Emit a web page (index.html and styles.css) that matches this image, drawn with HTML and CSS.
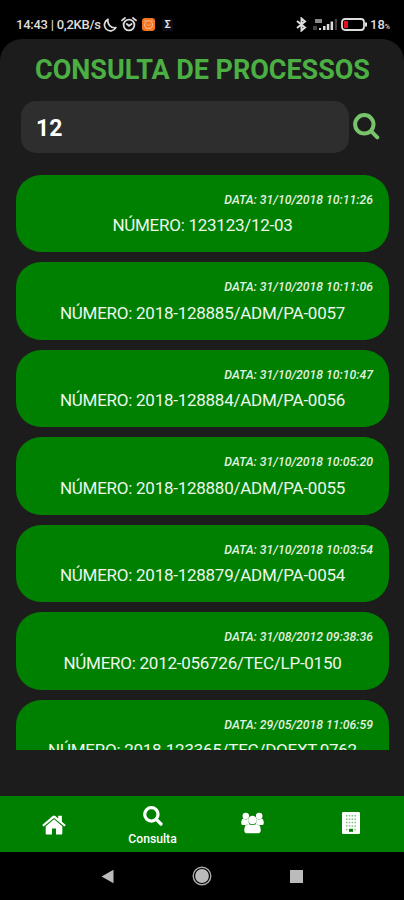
FILE: index.html
```html
<!DOCTYPE html>
<html lang="pt-BR">

<head>
  <meta charset="UTF-8">
  <meta name="viewport" content="width=device-width, initial-scale=1.0">
  <title>Consulta de Processos</title>
  <link rel="stylesheet" href="styles.css">
</head>

<body>
  <div class="phone">
    <header class="status-bar">
      <div class="status-left">
        <span class="status-time">14:43 | 0,2KB/s</span>
        <svg class="icon-moon" width="14" height="14" viewBox="0 0 14 14" fill="none" stroke="#ddd" stroke-width="1.7" stroke-linejoin="round">
          <path d="M5 1.4A6 6 0 1 0 12.8 9.6C8 10.5 4 6 5 1.4Z" />
        </svg>
        <svg class="icon-alarm" width="16" height="15" viewBox="0 0 16 15" fill="none" stroke="#ddd" stroke-width="1.8" stroke-linecap="round">
          <circle cx="8" cy="8" r="5.4" />
          <path d="M1 3.4L4 1M15 3.4L12 1M5.8 7L8 8.8L10.6 7" />
        </svg>
        <svg class="icon-app" width="13" height="13" viewBox="0 0 13 13" fill="none">
          <rect width="13" height="13" rx="3" fill="#f47521" />
          <circle cx="6.5" cy="6.7" r="4" stroke="#ffb07a" stroke-width="1.2" />
          <path d="M4.5 6.3L6.5 7.6L8.8 6.3M2.2 3L3.6 2M10.8 3L9.4 2" stroke="#ffb07a" stroke-width="1" />
        </svg>
        <span class="sigma">Σ</span>
      </div>
      <div class="status-right">
        <svg width="11" height="15" viewBox="0 0 11 15" fill="none" stroke="#ddd" stroke-width="2">
          <path d="M1 4L9 10.5L5.5 13.5V1.5L9 4.5L1 11" />
        </svg>
        <svg class="icon-signal" width="25" height="13" viewBox="0 0 25 13">
          <path d="M2 1H9V5H2Z" fill="#888" />
          <path d="M0 8H4V12H0Z" fill="#444" />
          <path d="M6 10H8V12H6ZM10 8H12.5V12H10ZM13.8 6H16.3V12H13.8ZM17.6 3.5H20.1V12H17.6Z" fill="#ddd" />
          <path d="M21.8 1H24V12H21.8Z" fill="#444" />
        </svg>
        <svg class="icon-battery" width="27" height="13" viewBox="0 0 27 13" fill="none">
          <rect x="1" y="1" width="22" height="11" rx="3" stroke="#ddd" stroke-width="1.8" />
          <path d="M3 3H7V10H3Z" fill="#e0101c" />
          <path d="M25 4.5V8.5" stroke="#ddd" stroke-width="2" />
        </svg>
        <span class="battery-level">18<small>%</small></span>
      </div>
    </header>

    <main class="screen">
      <h1>CONSULTA DE PROCESSOS</h1>

      <form class="search">
        <input type="text" class="search-input" value="12" aria-label="Número do processo">
        <button type="button" class="search-btn" aria-label="Buscar">
          <svg width="27" height="27" viewBox="0 0 27 27" fill="none" stroke="#78c46a" stroke-width="4" stroke-linecap="round">
            <circle cx="11.3" cy="11.3" r="9.2" />
            <path d="M18.3 18.3L24.3 24.3" />
          </svg>
        </button>
      </form>

      <div class="list">
        <div class="card">
          <p class="date">DATA: 31/10/2018 10:11:26</p>
          <p class="number">NÚMERO: 123123/12-03</p>
        </div>
        <div class="card">
          <p class="date">DATA: 31/10/2018 10:11:06</p>
          <p class="number">NÚMERO: 2018-128885/ADM/PA-0057</p>
        </div>
        <div class="card">
          <p class="date">DATA: 31/10/2018 10:10:47</p>
          <p class="number">NÚMERO: 2018-128884/ADM/PA-0056</p>
        </div>
        <div class="card">
          <p class="date">DATA: 31/10/2018 10:05:20</p>
          <p class="number">NÚMERO: 2018-128880/ADM/PA-0055</p>
        </div>
        <div class="card">
          <p class="date">DATA: 31/10/2018 10:03:54</p>
          <p class="number">NÚMERO: 2018-128879/ADM/PA-0054</p>
        </div>
        <div class="card">
          <p class="date">DATA: 31/08/2012 09:38:36</p>
          <p class="number">NÚMERO: 2012-056726/TEC/LP-0150</p>
        </div>
        <div class="card">
          <p class="date">DATA: 29/05/2018 11:06:59</p>
          <p class="number">NÚMERO: 2018-123365/TEC/DOEXT-0762</p>
        </div>
      </div>
    </main>

    <nav class="tabs">
      <a class="tab">
        <svg class="icon-home" width="24" height="20" viewBox="0 0 24 20" fill="#fff">
          <path d="M12 4.3L20.3 11.2V18.4Q20.3 19.6 19.1 19.6H14V13.6H10V19.6H4.9Q3.7 19.6 3.7 18.4V11.2Z" />
          <path d="M.2 9.9L10.7 1Q12 0 13.3 1L16.2 3.5V.8H19.9V6.7L23.8 9.9L22.4 11.5L12 2.9L1.6 11.5Z" />
        </svg>
      </a>
      <a class="tab active">
        <svg width="20" height="20" viewBox="0 0 27 27" fill="none" stroke="#fff" stroke-width="4.4" stroke-linecap="round">
          <circle cx="11.3" cy="11.3" r="9" />
          <path d="M18.3 18.3L24.3 24.3" />
        </svg>
        <span>Consulta</span>
      </a>
      <a class="tab">
        <svg class="icon-users" width="23" height="22" viewBox="0 0 24 22" fill="#fff">
          <circle cx="5" cy="3.7" r="3.4" />
          <circle cx="19" cy="3.7" r="3.4" />
          <path d="M2.6 6.3Q5 8.3 8 6.2Q7 9.8 9 12.2Q6.5 11.6 5.3 13.2H2.4Q.2 13.2 .2 10.9Q.3 7 2.6 6.3ZM21.4 6.3Q19 8.3 16 6.2Q17 9.8 15 12.2Q17.5 11.6 18.7 13.2H21.6Q23.8 13.2 23.8 10.9Q23.7 7 21.4 6.3Z" />
          <circle cx="12" cy="7.9" r="4.5" />
          <path d="M7.7 12Q12 14.4 16.3 12Q20.4 12.2 20.6 18.3Q20.7 21.8 17.4 21.8H6.6Q3.3 21.8 3.4 18.3Q3.6 12.2 7.7 12Z" />
        </svg>
      </a>
      <a class="tab">
        <svg class="icon-building" width="18" height="22" viewBox="0 0 18 22">
          <rect width="18" height="22" rx="1.3" fill="#fff" />
          <path d="M4 3.8H14M4 7.2H14M4 10.6H14M4 14H14" stroke="#7fbf7f" stroke-width="1.5" stroke-dasharray="1.5 1.33" />
          <path d="M4 17.4H5.5M12.5 17.4H14" stroke="#7fbf7f" stroke-width="1.5" />
          <path d="M7 16.8H11V19.8H7Z" fill="#008000" />
        </svg>
      </a>
    </nav>

    <footer class="system-nav">
      <svg width="13" height="15" viewBox="0 0 13 15" fill="#bbb">
        <path d="M12.5 .7V14.3L.5 7.5Z" />
      </svg>
      <svg width="20" height="20" viewBox="0 0 20 20" fill="none">
        <circle cx="10" cy="10" r="8.8" stroke="#aaa" stroke-width="1.4" />
        <circle cx="10" cy="10" r="6.9" fill="#bbb" />
      </svg>
      <svg width="13" height="13" viewBox="0 0 13 13" fill="#bbb">
        <rect width="13" height="13" />
      </svg>
    </footer>
  </div>
</body>

</html>
```
FILE: styles.css
```css
body {
  font-family: Roboto, 'Liberation Sans', sans-serif;
  margin: 0;
  background: #000;
  color: #fff;
}

.phone {
  display: flex;
  flex-direction: column;
  height: 900px;
  overflow: hidden;
}

.status-bar {
  display: flex;
  justify-content: space-between;
  align-items: center;
  height: 29px;
  padding: 10px 14px 0 16px;
  font-size: 13px;
  font-weight: 500;
  color: #ddd;
}

.status-left,
.status-right {
  display: flex;
  align-items: center;
}

.status-time {
  width: 87px;
  white-space: nowrap;
  letter-spacing: -0.25px;
}

.icon-alarm {
  margin-left: 4px;
}

.icon-app {
  margin-left: 5px;
}

.sigma {
  margin-left: 7px;
  width: 11px;
  line-height: 12px;
  font-size: 11px;
  font-weight: 700;
  text-align: center;
  background: #0c0c1a;
}

.icon-signal {
  margin-left: 6px;
}

.icon-battery {
  margin-left: 3px;
}

.battery-level {
  margin-left: 2px;
}

.battery-level small {
  font-size: 7px;
}

.screen {
  height: 757px;
  background: #1c1c1c;
  border-radius: 22px 22px 0 0;
}

h1 {
  margin: 0;
  padding-top: 14px;
  line-height: 34px;
  font-size: 27px;
  font-weight: 700;
  letter-spacing: -0.04px;
  text-align: center;
  text-indent: 1px;
  white-space: nowrap;
  color: #4caf43;
}

.search {
  display: flex;
  margin: 14px 24px 0 21px;
}

.search-input {
  box-sizing: border-box;
  width: 328px;
  height: 52px;
  padding: 2px 15px 0;
  border: none;
  border-radius: 15px;
  background: #2e2e2e;
  color: #fff;
  font-family: inherit;
  font-size: 23px;
  font-weight: 700;
}

.search-btn {
  margin-left: 4px;
  padding: 12px 0 0;
  border: none;
  background: none;
  line-height: 0;
  display: flex;
  align-items: flex-start;
}

.list {
  display: flex;
  flex-direction: column;
  gap: 10px;
  height: 575px;
  margin: 21.5px 15px 0 16px;
  overflow: hidden;
}

.card {
  box-sizing: border-box;
  flex: none;
  height: 77.5px;
  padding: 17.4px 16px 0;
  border-radius: 25px;
  background: #008000;
}

.date {
  margin: 0;
  line-height: 16px;
  font-size: 12.25px;
  font-style: italic;
  font-weight: 500;
  text-align: right;
  white-space: nowrap;
  color: #e2f2e0;
}

.number {
  margin: 6.6px 0 0;
  line-height: 22px;
  font-size: 17px;
  letter-spacing: -0.26px;
  text-align: center;
  white-space: nowrap;
  color: #edf7ec;
}

.tabs {
  display: flex;
  height: 56px;
  padding: 0 4px;
  background: #008000;
}

.tab {
  flex: 1;
  display: flex;
  flex-direction: column;
  justify-content: center;
  align-items: center;
}

.tab.active {
  padding-top: 3px;
}

.tab span {
  margin-top: 6px;
  line-height: 14px;
  font-size: 12.2px;
  font-weight: 500;
}

.icon-home {
  margin-top: 2px;
}

.icon-users {
  margin: -2px 0 0 2px;
}

.icon-building {
  margin-top: -2px;
}

.system-nav {
  display: flex;
  justify-content: space-between;
  align-items: center;
  height: 48px;
  padding: 0 101px;
}
```
